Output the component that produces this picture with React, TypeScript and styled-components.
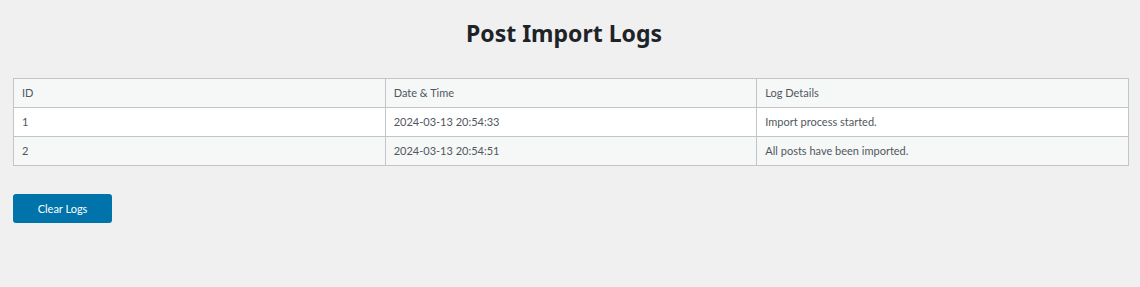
import React from "react";
import styled, { createGlobalStyle } from "styled-components";

const GlobalStyle = createGlobalStyle`
  body {
    margin: 0;
    background: #f0f0f1;
    font-family: "Noto Sans", "Open Sans", sans-serif;
    color: #3c434a;
  }
`;

const logs = [
  { id: 1, time: "2024-03-13 20:54:33", details: "Import process started." },
  { id: 2, time: "2024-03-13 20:54:51", details: "All posts have been imported." },
];

const Wrap = styled.div`
  padding: 18px 11px 0 13px;
  height: 287px;
  box-sizing: border-box;
`;

const Title = styled.h1`
  margin: 0 0 30px;
  text-align: center;
  font-size: 23px;
  font-weight: 700;
  line-height: 30px;
  color: #1d2327;
  padding-right: 14px;
`;

const Table = styled.table`
  width: 100%;
  border-collapse: collapse;
  table-layout: fixed;
  border: 1px solid #c3c4c7;
`;

const Row = styled.tr<{ $alt?: boolean }>`
  background: ${(p) => (p.$alt ? "#f6f7f7" : "#ffffff")};
`;

const Th = styled.th`
  text-align: left;
  font-family: Lato, "Noto Sans", sans-serif;
  font-weight: 400;
  font-size: 11px;
  height: 26px;
  padding: 0 8px 2px;
  border: 1px solid #c3c4c7;
  color: #50575e;
`;

const Td = styled.td`
  font-family: Lato, "Noto Sans", sans-serif;
  font-size: 11px;
  height: 26px;
  padding: 0 8px 2px;
  border: 1px solid #c3c4c7;
  color: #50575e;
`;

const Button = styled.button`
  margin-top: 28px;
  width: 99px;
  height: 29px;
  background: #0073aa;
  border: none;
  border-radius: 3px;
  color: #ffffff;
  font-family: Lato, "Noto Sans", sans-serif;
  font-size: 11px;
  cursor: pointer;
`;

const App = () => {
  return (
    <Wrap>
      <GlobalStyle />
      <Title>Post Import Logs</Title>
      <Table>
        <thead>
          <Row $alt>
            <Th>ID</Th>
            <Th>Date &amp; Time</Th>
            <Th>Log Details</Th>
          </Row>
        </thead>
        <tbody>
          {logs.map((log, i) => (
            <Row key={log.id} $alt={i % 2 === 1}>
              <Td>{log.id}</Td>
              <Td>{log.time}</Td>
              <Td>{log.details}</Td>
            </Row>
          ))}
        </tbody>
      </Table>
      <Button>Clear Logs</Button>
    </Wrap>
  );
};

export default App;
